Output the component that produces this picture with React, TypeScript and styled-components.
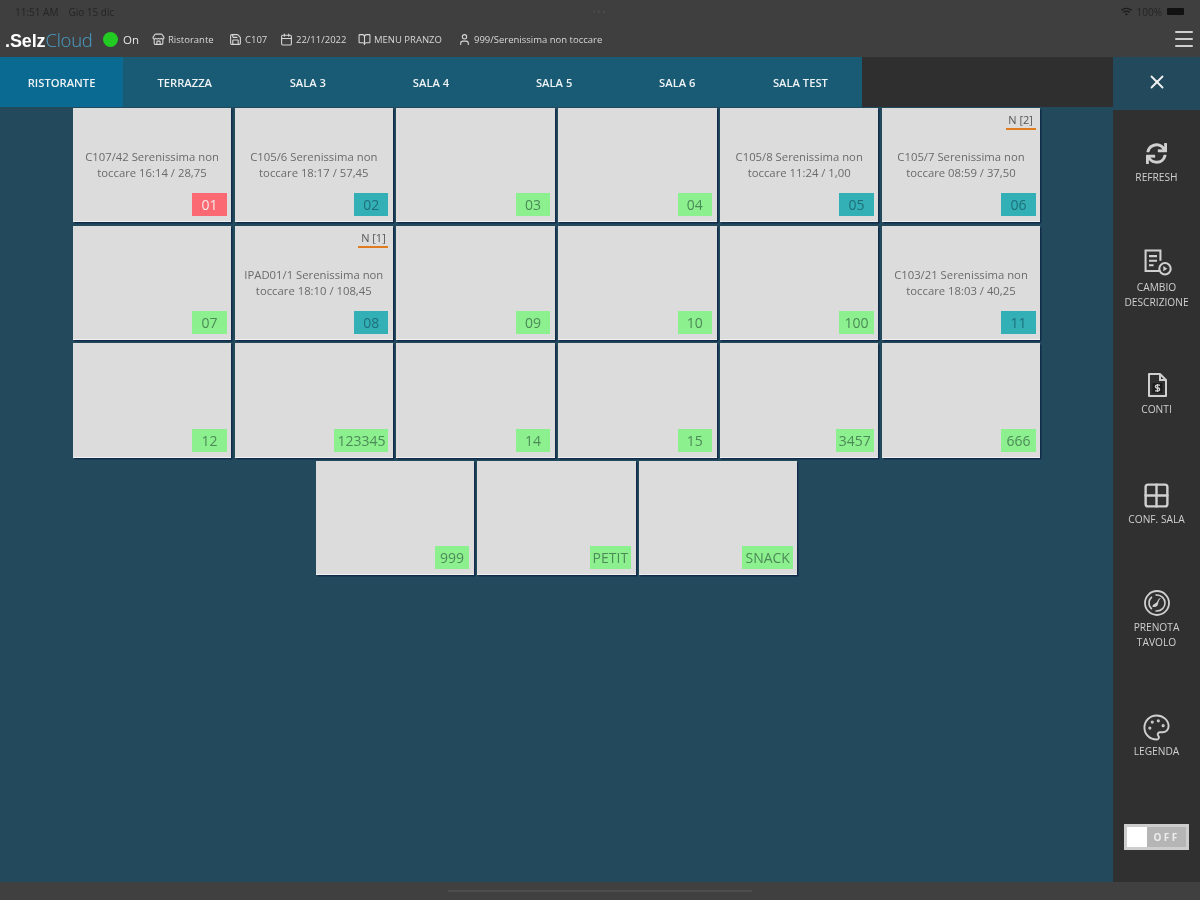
import React from 'react';
import styled, { createGlobalStyle } from 'styled-components';
import { BookOpen, Calendar, Grid2x2, Menu, Palette, Save, Store, User, X } from 'lucide-react';
import { FaSync, FaWifi } from 'react-icons/fa';

const Global = createGlobalStyle`
  html, body { margin: 0; padding: 0; background: #234a5c; }
  body { font-family: "Open Sans", "Liberation Sans", sans-serif; }
`;

const Page = styled.div`
  width: 1200px;
  height: 900px;
  overflow: hidden;
  display: flex;
  flex-direction: column;
  background: #234a5c;
  filter: blur(0.4px);
`;

const Top = styled.header`
  height: 57px;
  background: #3f3f3f;
  display: flex;
  flex-direction: column;
`;

const StatusBar = styled.div`
  height: 23px;
  padding: 0 16px 0 15px;
  display: grid;
  grid-template-columns: 1fr auto 1fr;
  align-items: center;
  font-size: 10px;
  color: #242424;
`;

const StatusGroup = styled.div`
  display: flex;
  align-items: center;
  gap: 10px;
`;

const StatusRight = styled(StatusGroup)`
  justify-content: flex-end;
  gap: 5px;
`;

const Dots = styled.span`
  color: #4c4c4c;
  font-size: 10px;
  letter-spacing: 1px;
`;

const Battery = styled.span`
  width: 17px;
  height: 7px;
  background: #111;
  border-radius: 1px;
`;

const InfoBar = styled.div`
  height: 32px;
  padding: 0 4px 0 5px;
  display: flex;
  align-items: center;
`;

const Logo = styled.div`
  font-family: "Liberation Sans", sans-serif;
  font-size: 18px;
  width: 97px;
  letter-spacing: -0.1px;
  color: #fff;
  font-weight: 700;
`;

const LogoCloud = styled.span`
  color: #4a9fc8;
  font-family: "Open Sans", sans-serif;
  font-size: 18.500px;
  font-weight: 300;
  letter-spacing: -0.3px;
`;

const Dot = styled.span`
  width: 15px;
  height: 15px;
  border-radius: 50%;
  background: #22cc22;
  margin-left: 1px;
  margin-right: 5px;
`;

const OnLabel = styled.span`
  font-size: 11.5px;
  color: #e6e6e6;
  width: 29px;
`;

const Info = styled.span<{ $w: number }>`
  width: ${p => p.$w}px;
  display: flex;
  align-items: center;
  gap: 3px;
  font-size: 9.5px;
  color: #d8d8d8;
  white-space: nowrap;
  svg { flex: none; }
`;

const Burger = styled.div`
  margin-left: auto;
  color: #cfcfcf;
  display: flex;
`;

const TabRow = styled.nav`
  height: 50px;
  display: flex;
  background: #2f2f2f;
`;

const Tabs = styled.div`
  display: flex;
  width: 862px;
  background: #195a75;
`;

const Tab = styled.div<{ $active?: boolean }>`
  flex: 1;
  display: flex;
  align-items: center;
  justify-content: center;
  font-size: 11.2px;
  font-weight: 600;
  color: #eef3f5;
  background: ${p => (p.$active ? '#0b6a92' : 'transparent')};
`;

const TabGap = styled.div`
  flex: 1;
`;

const CloseBox = styled.div`
  width: 87px;
  background: #234a5c;
  color: #f2f2f2;
  display: flex;
  align-items: center;
  justify-content: center;
`;

const Body = styled.div`
  flex: 1;
  display: flex;
  min-height: 0;
`;

const Floor = styled.main`
  flex: 1;
  display: flex;
  justify-content: center;
  align-items: flex-start;
  padding-top: 1px;
`;

const Tables = styled.div`
  width: 971px;
  display: flex;
  flex-wrap: wrap;
  justify-content: center;
  gap: 3.5px;
`;

const Card = styled.div`
  position: relative;
  width: 158.3px;
  height: 114.2px;
  box-sizing: border-box;
  background: #dcdcdc;
  border-bottom: 1px solid #f0f0f0;
  box-shadow: 1.5px 1.5px 0 #102c4a;
  display: flex;
  align-items: center;
  justify-content: center;
`;

const Desc = styled.div`
  width: 150px;
  margin-top: 1px;
  font-size: 11.3px;
  line-height: 16px;
  text-align: center;
  color: #6a6a6a;
`;

const Note = styled.span`
  position: absolute;
  top: 5px;
  right: 4.5px;
  width: 30px;
  height: 17px;
  box-sizing: border-box;
  border-bottom: 2px solid #e07b1e;
  font-size: 11px;
  line-height: 13px;
  text-align: center;
  color: #555;
`;

const Badge = styled.span<{ $state: 'free' | 'busy' | 'alert' }>`
  position: absolute;
  right: 4.5px;
  bottom: 5px;
  min-width: 34.5px;
  height: 23px;
  padding: 0 3px;
  box-sizing: border-box;
  display: flex;
  align-items: center;
  justify-content: center;
  font-size: 14px;
  color: ${p => (p.$state === 'alert' ? '#f6e8e8' : p.$state === 'busy' ? '#1f6f78' : '#4c8a58')};
  background: ${p => (p.$state === 'alert' ? '#fb6a72' : p.$state === 'busy' ? '#32b0b6' : '#8df08f')};
`;

const Side = styled.aside`
  width: 87px;
  margin-top: 3px;
  padding: 28px 0 32px;
  box-sizing: border-box;
  background: #303030;
  display: flex;
  flex-direction: column;
  align-items: center;
`;

const SideItem = styled.div<{ $h: number }>`
  flex: none;
  height: ${p => p.$h}px;
  width: 87px;
  display: flex;
  flex-direction: column;
  align-items: center;
  font-size: 10.2px;
  line-height: 15px;
  color: #cfcfcf;
  text-align: center;
`;

const SideIcon = styled.div`
  height: 30px;
  margin-bottom: 2px;
  display: flex;
  align-items: center;
  justify-content: center;
`;

const Toggle = styled.div`
  margin-top: auto;
  flex: none;
  width: 65px;
  height: 26px;
  box-sizing: border-box;
  border: 3px solid #cdcdcd;
  background: #b5b5b5;
  display: flex;
  align-items: center;
`;

const Knob = styled.span`
  width: 20px;
  height: 20px;
  background: #fff;
`;

const ToggleText = styled.span`
  flex: 1;
  text-align: center;
  font-size: 10px;
  font-weight: 700;
  letter-spacing: 2.4px;
  color: #ececec;
`;

const Bottom = styled.footer`
  height: 18px;
  flex: none;
  background: #404040;
  display: flex;
  justify-content: center;
`;

const HomeBar = styled.span`
  width: 304px;
  height: 2px;
  margin-top: 8px;
  background: #4e4e4e;
`;

const DocPlayIcon = () => (
  <svg width="32" height="32" viewBox="0 0 28 28" fill="none" stroke="currentColor" strokeWidth="1.8">
    <path d="M17 21H4V3h13v9" />
    <path d="M7 8h7M7 12h7M7 16h4" />
    <circle cx="21" cy="19" r="5" />
    <path d="M19.5 16.7l3.5 2.3-3.5 2.3z" fill="currentColor" stroke="none" />
  </svg>
);

const BillIcon = () => (
  <svg width="26" height="28" viewBox="0 0 26 28" fill="none" stroke="currentColor" strokeWidth="2">
    <path d="M5 3h11l6 6v16H5z" strokeLinejoin="round" />
    <path d="M16 3v6h6" />
    <rect x="8.5" y="12" width="10" height="10" fill="#1c1c1c" stroke="none" />
    <path d="M16 14.2h-3.2a1.3 1.3 0 0 0 0 2.8h1.4a1.3 1.3 0 0 1 0 2.8H11M13.5 13v8" strokeWidth="1.3" />
  </svg>
);

const BookingIcon = () => (
  <svg width="28" height="28" viewBox="0 0 28 28" fill="none" stroke="currentColor">
    <circle cx="14" cy="14" r="12" strokeWidth="1.8" />
    <circle cx="14" cy="14" r="8" strokeWidth="1.6" strokeDasharray="14 4" />
    <path d="M18 9c-3 0-3 3-4.5 4.5S9.500 15 9.500 18c3 0 4 0 5-1.500s.5-5 3.500-7.500z" fill="currentColor" stroke="none" />
  </svg>
);

type T = { n: string; d?: string; s?: 'busy' | 'alert'; note?: string };
const data: T[] = [
  { n: '01', d: 'C107/42 Serenissima non toccare 16:14 / 28,75', s: 'alert' },
  { n: '02', d: 'C105/6 Serenissima non toccare 18:17 / 57,45', s: 'busy' },
  { n: '03' },
  { n: '04' },
  { n: '05', d: 'C105/8 Serenissima non toccare 11:24 / 1,00', s: 'busy' },
  { n: '06', d: 'C105/7 Serenissima non toccare 08:59 / 37,50', s: 'busy', note: 'N [2]' },
  { n: '07' },
  { n: '08', d: 'IPAD01/1 Serenissima non toccare 18:10 / 108,45', s: 'busy', note: 'N [1]' },
  { n: '09' },
  { n: '10' },
  { n: '100' },
  { n: '11', d: 'C103/21 Serenissima non toccare 18:03 / 40,25', s: 'busy' },
  { n: '12' },
  { n: '123345' },
  { n: '14' },
  { n: '15' },
  { n: '3457' },
  { n: '666' },
  { n: '999' },
  { n: 'PETIT' },
  { n: 'SNACK' },
];

const tabs = ['RISTORANTE', 'TERRAZZA', 'SALA 3', 'SALA 4', 'SALA 5', 'SALA 6', 'SALA TEST'];

const side = [
  { h: 110, icon: <FaSync size={21} />, label: ['REFRESH'] },
  { h: 122, icon: <DocPlayIcon />, label: ['CAMBIO', 'DESCRIZIONE'] },
  { h: 110, icon: <BillIcon />, label: ['CONTI'] },
  { h: 108, icon: <Grid2x2 size={29} strokeWidth={2} />, label: ['CONF. SALA'] },
  { h: 124, icon: <BookingIcon />, label: ['PRENOTA', 'TAVOLO'] },
  { h: 60, icon: <Palette size={29} strokeWidth={1.6} />, label: ['LEGENDA'] },
];

export default function App() {
  return (
    <Page>
      <Global />
      <Top>
        <StatusBar>
          <StatusGroup><span>11:51 AM</span><span>Gio 15 dic</span></StatusGroup>
          <Dots>•••</Dots>
          <StatusRight>
            <FaWifi size={11} color="#1c1c1c" />
            <span>100%</span>
            <Battery />
          </StatusRight>
        </StatusBar>
        <InfoBar>
          <Logo>.Selz<LogoCloud>Cloud</LogoCloud></Logo>
          <Dot />
          <OnLabel>On</OnLabel>
          <Info $w={77}><Store size={13} />Ristorante</Info>
          <Info $w={51}><Save size={13} />C107</Info>
          <Info $w={78}><Calendar size={13} />22/11/2022</Info>
          <Info $w={100}><BookOpen size={13} />MENU PRANZO</Info>
          <Info $w={150}><User size={13} />999/Serenissima non toccare</Info>
          <Burger><Menu size={24} /></Burger>
        </InfoBar>
      </Top>
      <TabRow>
        <Tabs>
          {tabs.map((t, i) => <Tab key={t} $active={i === 0}>{t}</Tab>)}
        </Tabs>
        <TabGap />
        <CloseBox><X size={22} /></CloseBox>
      </TabRow>
      <Body>
        <Floor>
          <Tables>
            {data.map(t => (
              <Card key={t.n}>
                {t.note && <Note>{t.note}</Note>}
                {t.d && <Desc>{t.d}</Desc>}
                <Badge $state={t.s ?? 'free'}>{t.n}</Badge>
              </Card>
            ))}
          </Tables>
        </Floor>
        <Side>
          {side.map(s => (
            <SideItem key={s.label[0]} $h={s.h}>
              <SideIcon>{s.icon}</SideIcon>
              <div>{s.label.map(l => <div key={l}>{l}</div>)}</div>
            </SideItem>
          ))}
          <Toggle><Knob /><ToggleText>OFF</ToggleText></Toggle>
        </Side>
      </Body>
      <Bottom><HomeBar /></Bottom>
    </Page>
  );
}
